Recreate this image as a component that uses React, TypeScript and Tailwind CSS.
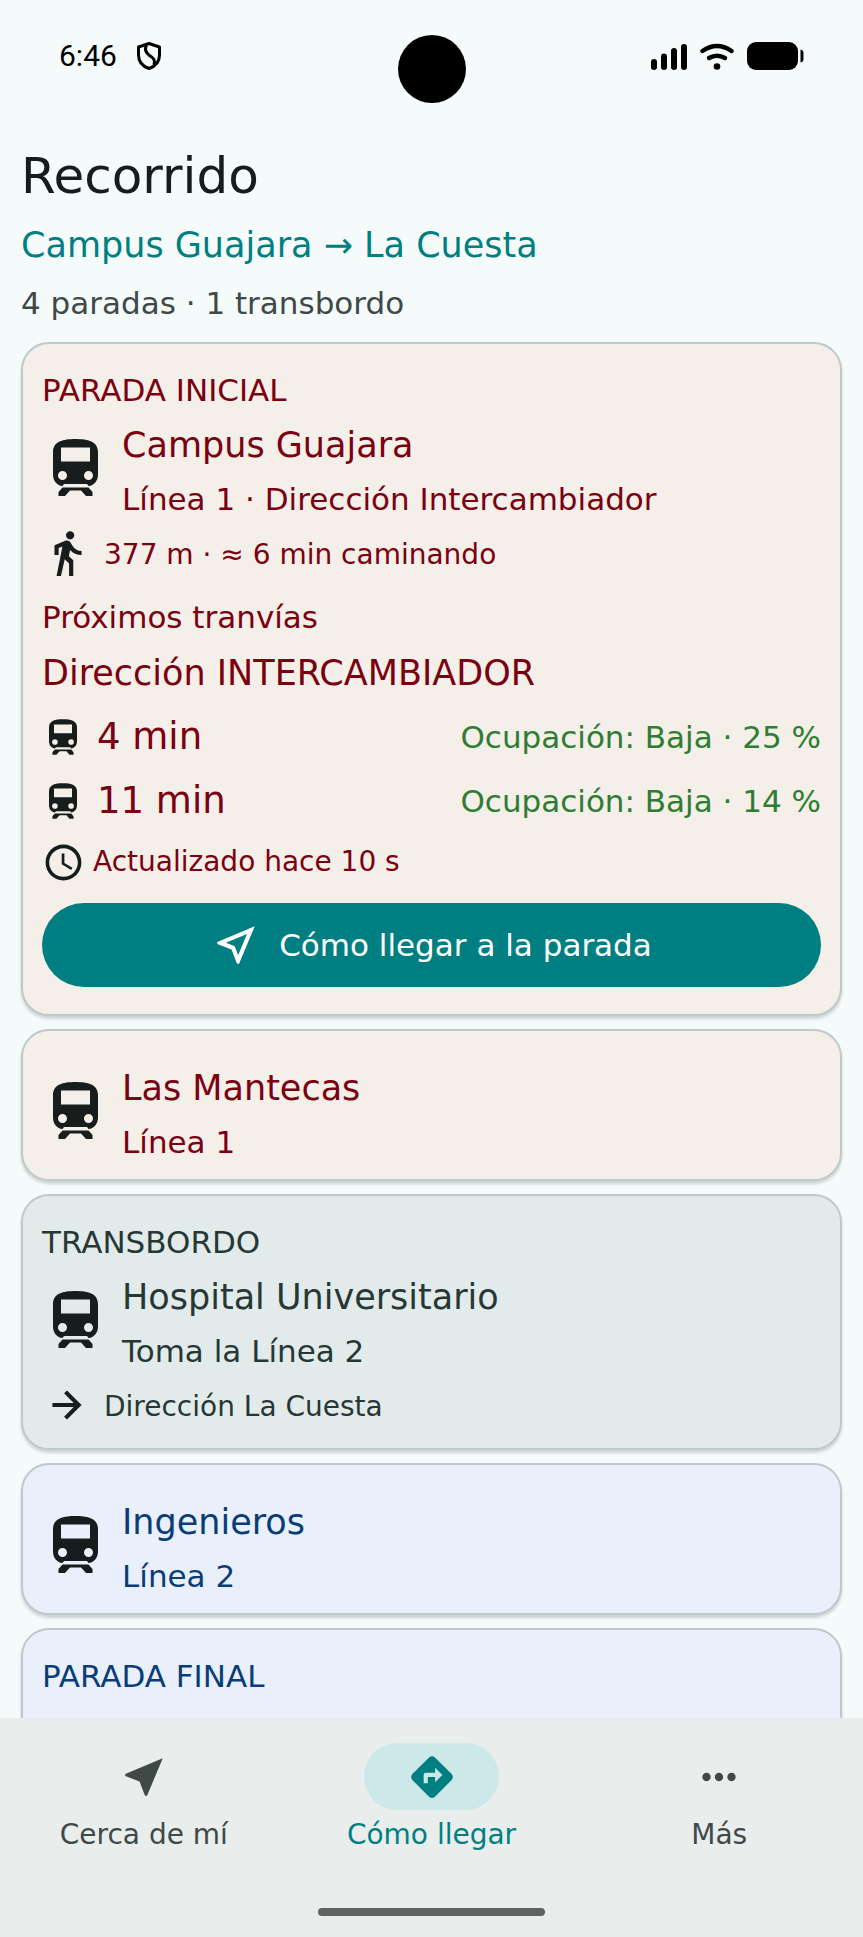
import type { ReactNode } from "react";
import { MdAccessTime, MdDirections, MdDirectionsWalk, MdMoreHoriz, MdNearMe, MdOutlineNearMe } from "react-icons/md";

const TrainIcon = ({ className }: { className: string }) => (
    <svg viewBox="0 0 45 57" fill="currentColor" className={`shrink-0 ${className}`} aria-hidden="true">
        <path
            fillRule="evenodd"
            d="M22.500 0C10 0 0 2.500 0 13V35.500C0 42 4 46.500 9.500 47L11 45H34L35.500 47C41 46.500 45 42 45 35.500V13C45 2.500 35 0 22.500 0ZM8 8.500H37V22.500H8ZM9.500 32A4.500 4.500 0 1 1 9.500 41A4.500 4.500 0 1 1 9.500 32ZM35.500 32A4.500 4.500 0 1 1 35.500 41A4.500 4.500 0 1 1 35.500 32Z"
        />
        <path d="M9.500 48.500H35.500L39.500 53V57H33L28 51.500H17L12 57H5.500V53Z" />
    </svg>
);

const ArrowIcon = () => (
    <svg viewBox="0 0 24 24" fill="currentColor" className="mb-1 size-[50px] shrink-0 text-[#161d1c]" aria-hidden="true">
        <path d="M12 5l-1.400 1.400 4.600 4.600H5v2h10.200l-4.600 4.600L12 19l7-7z" />
    </svg>
);

const StatusBar = () => (
    <div className="relative flex h-28 shrink-0 items-center justify-between pr-[59px] pl-[59px] text-black">
        <div className="flex items-center gap-5">
            <span className="font-['Roboto',sans-serif] text-[30px] leading-8">6:46</span>
            <svg viewBox="0 0 24 28" className="h-7 w-6" fill="none" stroke="currentColor" strokeWidth="3" strokeLinejoin="round" aria-hidden="true">
                <path d="M12 1.500L22.500 5V13C22.500 20 18 24.500 12 26.500C6 24.500 1.500 20 1.500 13V5Z" />
                <path d="M9.500 3C7 8 9 11 12.500 13.500C16.500 16 18.500 18 17 23" />
            </svg>
        </div>
        <div className="absolute top-[35px] left-1/2 size-[68px] -translate-x-1/2 rounded-full bg-black" />
        <div className="flex items-center gap-3">
            <svg viewBox="0 0 36 28" className="h-7 w-9" fill="currentColor" aria-hidden="true">
                <rect x="0" y="17" width="6" height="11" rx="3" />
                <rect x="10" y="11.500" width="6" height="16.500" rx="3" />
                <rect x="20" y="6" width="6" height="22" rx="3" />
                <rect x="30" y="2" width="6" height="26" rx="3" />
            </svg>
            <svg viewBox="0 0 36 28" className="h-7 w-9" fill="none" stroke="currentColor" strokeWidth="4.500" strokeLinecap="round" aria-hidden="true">
                <path d="M3.500 9Q18 -1 32.500 9" />
                <path d="M10 16Q18 11.500 26 16" />
                <circle cx="18" cy="24.500" r="3.300" fill="currentColor" stroke="none" />
            </svg>
            <svg viewBox="0 0 57 28" className="h-7 w-[57px]" fill="currentColor" aria-hidden="true">
                <rect x="0" y="0" width="51" height="28" rx="9" />
                <path d="M53.500 7.500Q56.500 8 56.500 11V17Q56.500 20 53.500 20.500Z" />
            </svg>
        </div>
    </div>
);

const Card = ({ className, children }: { className: string; children: ReactNode }) => (
    <section className={`rounded-[28px] border-2 border-[#bec9c9] px-[19px] pt-[19px] pb-[11px] shadow-[0_3px_3px_rgba(0,0,0,0.16)] ${className}`}>
        {children}
    </section>
);

const CardLabel = ({ children }: { children: ReactNode }) => <p className="text-[31px] leading-[54px]">{children}</p>;

const Stop = ({ name, detail }: { name: string; detail: string }) => (
    <div className="flex items-start gap-6 pl-[11px]">
        <TrainIcon className="mt-[22px] h-[57px] w-[45px] text-[#161d1c]" />
        <div>
            <h2 className="text-[35px] leading-[56px]">{name}</h2>
            <p className="text-[31px] leading-[52px]">{detail}</p>
        </div>
    </div>
);

const arrivals = [
    { minutes: 4, occupancy: 25 },
    { minutes: 11, occupancy: 14 },
];

const NavItem = ({ label, icon, active = false }: { label: string; icon: ReactNode; active?: boolean }) => (
    <a
        href="#"
        aria-current={active ? "page" : undefined}
        className={`flex flex-1 flex-col items-center ${active ? "text-[#007f82]" : "text-[#3f4948]"}`}
    >
        <span className={`flex h-[67px] w-[135px] items-center justify-center rounded-full ${active ? "bg-[#cde8e8]" : ""}`}>
            {icon}
        </span>
        <span className="text-[28px] leading-[50px]">{label}</span>
    </a>
);

export default function App() {
    return (
        <div className="flex h-screen w-full flex-col overflow-hidden bg-[#f5fbfb] font-['DejaVu_Sans',sans-serif]">
            <StatusBar />

            <main className="min-h-0 flex-1 overflow-hidden px-[21px] pt-6">
                <h1 className="text-[50px] leading-[80px] text-[#161d1c]">Recorrido</h1>
                <p className="text-[35px] leading-[58px] text-[#007f82]">Campus Guajara → La Cuesta</p>
                <p className="text-[31px] leading-[58px] text-[#3f4948]">4 paradas · 1 transbordo</p>

                <div className="mt-[10px] flex flex-col gap-[13px]">
                    <Card className="bg-[#f4efe8] text-[#7b0010]">
                        <CardLabel>PARADA INICIAL</CardLabel>
                        <Stop name="Campus Guajara" detail="Línea 1 · Dirección Intercambiador" />
                        <div className="flex h-[60px] items-center gap-3">
                            <MdDirectionsWalk className="mb-1 size-[50px] text-[#161d1c]" />
                            <p className="text-[28px]">377 m · ≈ 6 min caminando</p>
                        </div>
                        <h3 className="mt-1 text-[31px] leading-[56px]">Próximos tranvías</h3>
                        <p className="mb-1 text-[35px] leading-[56px]">Dirección INTERCAMBIADOR</p>
                        {arrivals.map(({ minutes, occupancy }) => (
                            <div key={minutes} className="flex h-16 items-center justify-between pl-[7px]">
                                <div className="flex items-center gap-5">
                                    <TrainIcon className="h-9 w-[28px] text-[#161d1c]" />
                                    <span className="text-[37px]">{minutes} min</span>
                                </div>
                                <span className="text-[31px] text-[#2e7d32]">Ocupación: Baja · {occupancy} %</span>
                            </div>
                        ))}
                        <div className="flex h-[58px] items-center gap-2">
                            <MdAccessTime className="size-[43px] text-[#161d1c]" />
                            <p className="text-[28px]">Actualizado hace 10 s</p>
                        </div>
                        <button className="mt-3 mb-4 flex h-[84px] w-full items-center justify-center gap-[18px] rounded-full bg-[#007f82] text-[31px] text-white">
                            <MdOutlineNearMe className="size-[50px]" />
                            Cómo llegar a la parada
                        </button>
                    </Card>

                    <Card className="bg-[#f4efe8] text-[#7b0010]">
                        <div className="pt-[10px]">
                            <Stop name="Las Mantecas" detail="Línea 1" />
                        </div>
                    </Card>

                    <Card className="bg-[#e3ebea] text-[#263836]">
                        <CardLabel>TRANSBORDO</CardLabel>
                        <Stop name="Hospital Universitario" detail="Toma la Línea 2" />
                        <div className="flex h-[60px] items-center gap-3">
                            <ArrowIcon />
                            <p className="text-[28px]">Dirección La Cuesta</p>
                        </div>
                    </Card>

                    <Card className="bg-[#e9f0fb] text-[#0a3d78]">
                        <div className="pt-[10px]">
                            <Stop name="Ingenieros" detail="Línea 2" />
                        </div>
                    </Card>

                    <Card className="min-h-48 bg-[#e9f0fb] text-[#0a3d78]">
                        <CardLabel>PARADA FINAL</CardLabel>
                    </Card>
                </div>
            </main>

            <footer className="shrink-0 bg-[#e9eeed] pt-[25px] pb-[21px]">
                <nav className="flex">
                    <NavItem label="Cerca de mí" icon={<MdNearMe className="size-[50px]" />} />
                    <NavItem label="Cómo llegar" icon={<MdDirections className="size-[50px]" />} active />
                    <NavItem label="Más" icon={<MdMoreHoriz className="size-[50px]" />} />
                </nav>
                <div className="mx-auto mt-12 h-2 w-[227px] rounded-full bg-[#5f6261]" />
            </footer>
        </div>
    );
}
